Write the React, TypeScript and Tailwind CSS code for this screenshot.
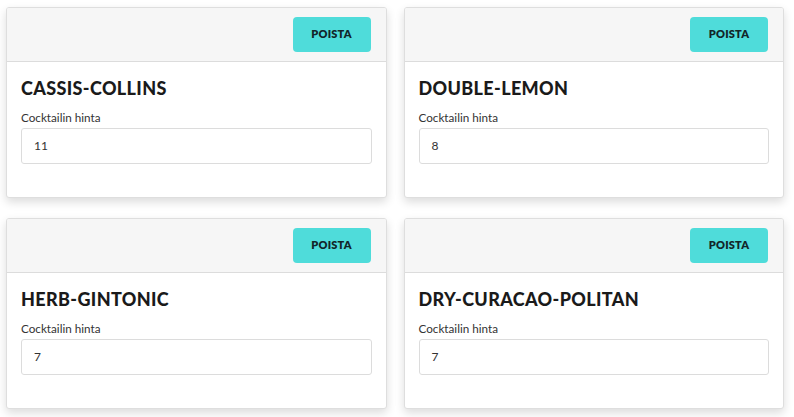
import React from "react";

const cocktails = [
  { name: "CASSIS-COLLINS", price: "11" },
  { name: "DOUBLE-LEMON", price: "8" },
  { name: "HERB-GINTONIC", price: "7" },
  { name: "DRY-CURACAO-POLITAN", price: "7" },
];

function CocktailCard({ name, price }: { name: string; price: string }) {
  return (
    <div className="bg-white border border-[#dedede] rounded-[3px] shadow-[0_4px_10px_rgba(0,0,0,0.14)] overflow-hidden">
      {/* Header */}
      <div className="h-[54px] bg-[#f6f6f6] border-b border-[#dcdcdc] flex items-center justify-end pr-[15px]">
        <button className="w-[78px] h-[35px] rounded-[4px] bg-[#4fdcda] text-[11px] font-extrabold tracking-[0.02em] text-[#12262a]">
          POISTA
        </button>
      </div>

      {/* Body */}
      <div className="px-[14px] pt-[15px] pb-[33px]">
        <h2 className="text-[18px] leading-[22px] font-black tracking-[0.02em] text-[#1a1a1a]">
          {name}
        </h2>
        <label className="block mt-[11px] text-[11.7px] leading-[14px] text-[#333]">
          Cocktailin hinta
        </label>
        <div className="mt-[4px] h-[36px] border border-[#dcdcdc] rounded-[3px] flex items-center px-[12px] text-[12px] text-[#333]">
          {price}
        </div>
      </div>
    </div>
  );
}

export default function App() {
  return (
    <div
      className="w-[794px] h-[417px] bg-white pl-[6px] pr-[10px] pt-[7px]"
      style={{ fontFamily: "Lato, 'Open Sans', sans-serif" }}
    >
      <div className="grid grid-cols-2 gap-x-[17px] gap-y-[20px]">
        {cocktails.map((c) => (
          <CocktailCard key={c.name} name={c.name} price={c.price} />
        ))}
      </div>
    </div>
  );
}
